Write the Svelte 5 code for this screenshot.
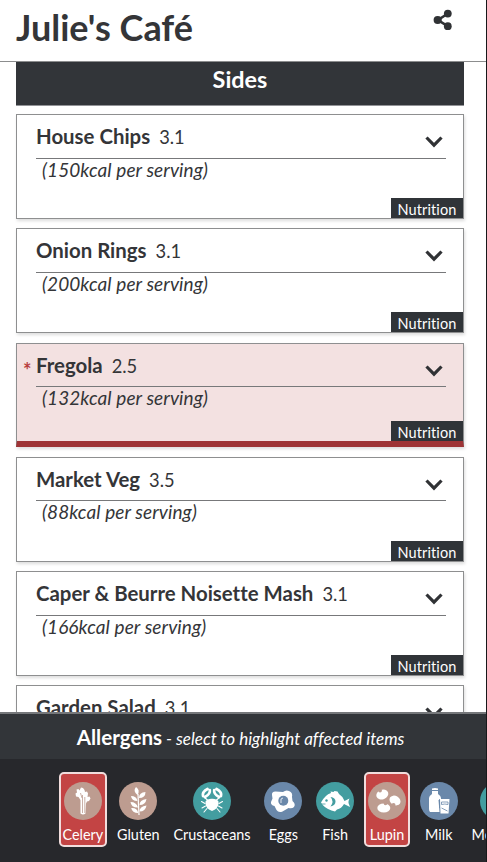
<script>
  const dishes = [
    { name: 'House Chips', price: '3.1', kcal: 150 },
    { name: 'Onion Rings', price: '3.1', kcal: 200 },
    { name: 'Fregola', price: '2.5', kcal: 132, flagged: true },
    { name: 'Market Veg', price: '3.5', kcal: 88 },
    { name: 'Caper & Beurre Noisette Mash', price: '3.1', kcal: 166 },
    { name: 'Garden Salad', price: '3.1', kcal: 120 }
  ];
  const allergens = [
    { name: 'Celery', tone: 'tan', selected: true },
    { name: 'Gluten', tone: 'tan' },
    { name: 'Crustaceans', tone: 'teal' },
    { name: 'Eggs', tone: 'blue' },
    { name: 'Fish', tone: 'teal' },
    { name: 'Lupin', tone: 'tan', selected: true },
    { name: 'Milk', tone: 'blue' },
    { name: 'Molluscs', tone: 'teal' }
  ];
</script>

<div class="app">
  <header>
    <h1>Julie's Café</h1>
    <svg class="share" viewBox="0 0 20 22" width="20" height="22">
      <path d="M15 4.5 5 11l10 6.3" fill="none" stroke="#303235" stroke-width="2.6" />
      <g fill="#303235"><circle cx="14.8" cy="4.6" r="3.9" /><circle cx="4.7" cy="11" r="4.1" /><circle cx="14.8" cy="17.2" r="3.9" /></g>
    </svg>
  </header>

  <main>
    <h2>Sides</h2>
    {#each dishes as dish}
      <article class:flagged={dish.flagged}>
        <div class="row">
          {#if dish.flagged}<span class="star">*</span>{/if}
          <h3>{dish.name}</h3>
          <span class="price">{dish.price}</span>
          <svg class="chevron" viewBox="0 0 20 14" width="20" height="14"><path d="m2.5 2.5 7.5 7.7 7.5-7.7" fill="none" stroke="#303235" stroke-width="3.2" /></svg>
        </div>
        <p>({dish.kcal}kcal per serving)</p>
        <button class="nutrition">Nutrition</button>
      </article>
    {/each}
  </main>

  <footer>
    <div class="legend"><b>Allergens</b><i>- select to highlight affected items</i></div>
    <div class="allergens">
      {#each allergens as a}
        <button class="allergen" class:selected={a.selected}>
          <svg class={a.tone} viewBox="0 0 38 38" width="38" height="38">
            <circle class="disc" cx="19" cy="19" r="19" />
            {#if a.name === 'Celery'}
              <path d="M16.500 32V18l-2-3-2.500-.5-.5-3 1.500-1-.5-3 2-.5 1 1.500 1.500-3 2 .5 1.500 2 .5 2 2-.5 1 2-.5 3.500 2-.5 1 2-1.500 2.500-2 .5-1 2-.5 10q-2.500 2-5 0Z" fill="#fff" />
              <path d="M18.500 31V13m2.300 18V15m-4.300-4 1.500 5" class="cut" />
            {:else if a.name === 'Gluten'}
              <path d="M20 33 19 12" fill="none" stroke="#fff" stroke-width="1.2" />
              <g fill="#fff">
                <path d="M18.500 13q-5-4-1.500-8 4.500 3 1.500 8ZM20 16q0-5.500 6.500-6 0 6-6.500 6ZM18.500 19q-6 0-6.500-5 5.500 0 6.500 5ZM20.500 23q0-5 7-6-1 6-7 6ZM19 25.500q-7 0-7.500-5.500 6 0 7.500 5.500ZM20.500 29.500q0-5 7-6-1 6-7 6ZM19.200 31q-6 0-7-5 6-.5 7 5Z" />
              </g>
            {:else if a.name === 'Crustaceans'}
              <path d="M12.500 19.500q2-3 6.500-2.800 4.500-.2 6.500 2.800.5 5-3.500 8l-3 1.500-3-1.500q-4-3-3.500-8Z" fill="#fff" />
              <g fill="none" stroke="#fff" stroke-linecap="round">
                <path d="M14.500 7q-5.500 3-4.500 7M16.800 8q.7 4-4.800 7M23.500 7q5.500 3 4.500 7M21.200 8q-.7 4 4.800 7" stroke-width="2.700" />
                <path d="m11 15 4 3.500m12-3.500-4 3.500M12 21.500l-3.500-2m4 4.500-3.500 2m5 .5L11 30m15-8.500 3.500-2m-4 4.500 3.500 2m-5 .5L27 30" stroke-width="1.100" />
              </g>
            {:else if a.name === 'Eggs'}
              <path d="M8 13q-.5-3.500 3.500-3.500l7.500.5q3-2.500 6-1 4 1.500 3 6l.5 4q3.500 3 1.500 6-2 2-5.500 1l-6 3.500q-4 1.500-6-1.500l-2-4q-4-1-3.500-4l1.500-3.500Z" fill="#fff" />
              <circle class="disc" cx="19.3" cy="18.8" r="5" />
              <path d="M17 21v-4l2-1" fill="none" stroke="#fff" stroke-width=".8" />
            {:else if a.name === 'Fish'}
              <path d="M5 20.500q4-7.500 10-9.500l-.5-1.500 3 .5 1-1 3 .5 1.500 2.500q4 2.500 5.500 7l5-2.500q-1.500 3-1 4.500l1.500 4-6-3q-2.500 4.500-7 5.500l-2 2-3.500-1Q8 26 5 20.500Z" fill="#fff" />
              <path d="M14.500 15q4 4.500 0 9.500 5-1 5-5t-5-4.500Z" class="disc" /><circle class="disc" cx="10.5" cy="18.500" r="1.2" />
              <path d="M5.500 22h4" class="cut" />
            {:else if a.name === 'Lupin'}
              <g fill="#fff">
                <ellipse cx="14.300" cy="12.500" rx="6.200" ry="4.800" transform="rotate(-22 14.300 12.500)" />
                <ellipse cx="27" cy="18.500" rx="5.800" ry="4.600" transform="rotate(30 27 18.500)" />
                <ellipse cx="15.800" cy="26" rx="6.500" ry="4.600" />
              </g>
              <circle class="disc" cx="12" cy="8.500" r="1.900" />
              <circle class="disc" cx="25.500" cy="23" r="2" />
              <circle class="disc" cx="17.500" cy="21.500" r="1.800" />
            {:else if a.name === 'Milk'}
              <path d="M12 6.500q3-1 6 0V8h-6zM12 9h6v3q3 2 3 4v2h-2.500l1 12H10q-1-1-1-3V16q0-2 3-4Z" fill="#fff" />
              <path d="M20 17h9.500l-1 14.500h-8Z" fill="#fff" /><path d="M19.500 17v9m2-6h6.500v2.500q-3-1-6.500 0ZM21.500 26l6 3" class="cut" />
            {/if}
          </svg>
          <span>{a.name}</span>
        </button>
      {/each}
    </div>
  </footer>
</div>

<style>
  :global(body) { background: #fff; }
  .app { width: 487px; height: 862px; box-sizing: border-box; border-right: 1px solid #17181a; display: flex; flex-direction: column; overflow: hidden; font-family: Lato, "Liberation Sans", sans-serif; font-variant-ligatures: none; color: #343538; }
  h1, h2, h3, p { margin: 0; }
  button { font: inherit; font-variant-ligatures: none; border: 0; margin: 0; color: #fff; }
  header { flex: none; height: 62px; box-sizing: border-box; border-bottom: 1px solid #8c8d8e; display: flex; justify-content: space-between; padding: 0 33px 0 16px; }
  h1 { font-size: 36px; line-height: 55px; font-weight: 700; white-space: nowrap; }
  .share { margin-top: 9px; }
  main { flex: 1; min-height: 0; overflow: hidden; padding: 0 22px 0 16px; display: flex; flex-direction: column; }
  h2 { flex: none; height: 43.5px; margin-bottom: 8.8px; background: #323539; color: #fff; text-align: center; font-size: 23.4px; line-height: 35px; border-bottom: 1px solid #929397; box-sizing: border-box; }
  article { flex: none; height: 104.8px; margin-bottom: 9.4px; box-sizing: border-box; border: 1.5px solid #8e8f90; background: #fff; box-shadow: 1px 2px 3px #0002; padding: 0 17px 0 19px; display: flex; flex-direction: column; }
  .row { flex: none; height: 43.6px; box-sizing: border-box; border-bottom: 1px solid #77787a; display: flex; align-items: baseline; position: relative; white-space: nowrap; }
  h3 { font-size: 20.4px; line-height: 42px; }
  .price { font-size: 18.3px; margin-left: 9px; }
  .chevron { margin-left: auto; margin-right: 2.5px; align-self: flex-start; margin-top: 20px; }
  p { font-size: 19px; letter-spacing: .1px; font-style: italic; line-height: 21px; margin-left: 6px; }
  .nutrition { align-self: flex-end; margin-top: auto; margin-right: -17px; width: 72px; height: 20px; padding: 0; background: #303438; font-size: 14.5px; letter-spacing: .1px; line-height: 23px; }
  .flagged { background: #f3e1e1; border-bottom: 6px solid #9e3436; }
  .star { position: absolute; left: -13px; top: 14px; font-size: 20px; font-weight: 700; line-height: 24px; color: #b83e3e; }
  footer { flex: none; height: 150px; box-sizing: border-box; border-top: 2px solid #75777a; background: #27282c; color: #fff; }
  .legend { height: 45px; box-sizing: border-box; background: #323539; display: flex; justify-content: center; align-items: baseline; line-height: 26px; white-space: nowrap; padding: 10px 5px 0 0; }
  .legend b { font-size: 20.6px; margin-right: 4px; }
  .legend i { font-size: 17px; }
  .allergens { display: flex; gap: 5.8px; padding: 13px 0 0 58.5px; overflow: hidden; }
  .allergen { flex: none; height: 75px; box-sizing: border-box; border: 2px solid transparent; border-radius: 5px; background: none; padding: 8px 2px 0; display: flex; flex-direction: column; align-items: center; min-width: 46px; }
  .allergen.selected { background: #c34444; border-color: #f1dddd; }
  .allergen span { font-size: 14.4px; line-height: 18px; margin-top: 6px; }
  .tan { --tone: #bd9c90; }
  .teal { --tone: #439da0; }
  .blue { --tone: #6a88aa; }
  .disc { fill: var(--tone); }
  .cut { fill: none; stroke: var(--tone); stroke-width: .8; }
</style>
